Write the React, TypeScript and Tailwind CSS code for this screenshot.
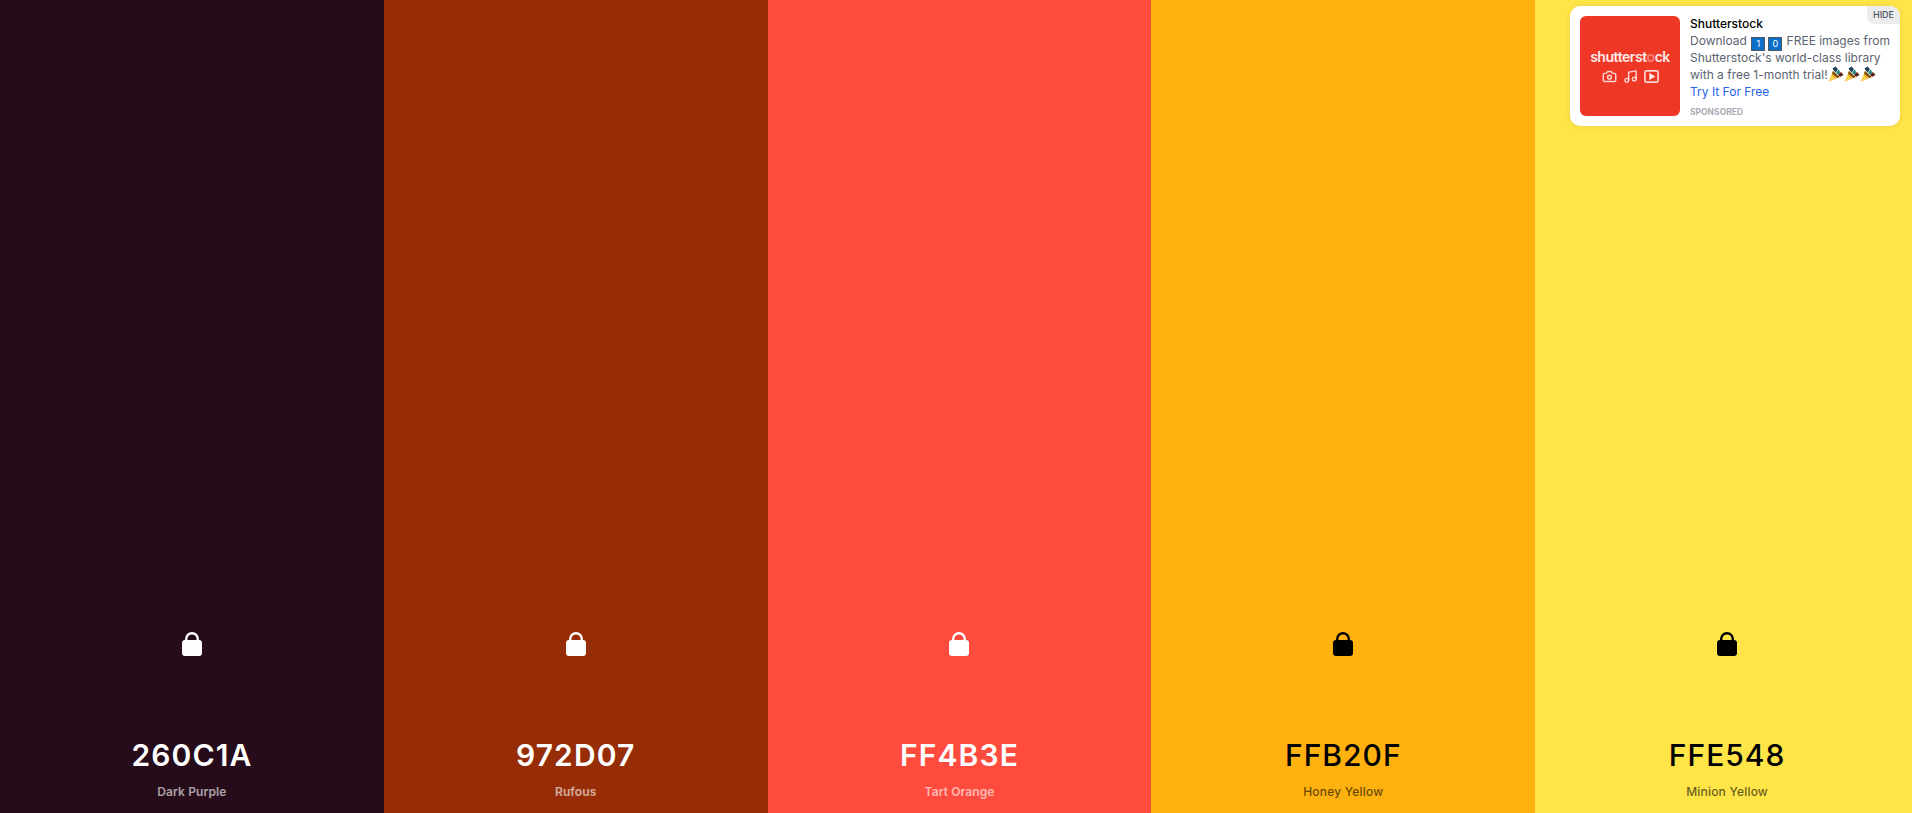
import { Camera, Music } from 'lucide-react'

const colors = [
  { hex: '260C1A', name: 'Dark Purple', bg: 'bg-[#260c1a]', text: 'text-white', weight: 'font-semibold tracking-[1.1px]', label: 'font-semibold tracking-[0.1px]' },
  { hex: '972D07', name: 'Rufous', bg: 'bg-[#972d07]', text: 'text-white', weight: 'font-semibold tracking-[1.1px]', label: 'font-semibold tracking-[0.1px]' },
  { hex: 'FF4B3E', name: 'Tart Orange', bg: 'bg-[#ff4b3e]', text: 'text-white', weight: 'font-semibold tracking-[1.1px]', label: 'font-semibold tracking-[0.1px]' },
  { hex: 'FFB20F', name: 'Honey Yellow', bg: 'bg-[#ffb20f]', text: 'text-black', weight: 'font-medium tracking-[1px]', label: 'font-medium tracking-[0.2px]' },
  { hex: 'FFE548', name: 'Minion Yellow', bg: 'bg-[#ffe548]', text: 'text-black', weight: 'font-medium tracking-[1px]', label: 'font-medium tracking-[0.2px]' },
]

function Lock() {
  return (
    <svg viewBox="0 0 22 24" className="h-6 w-[22px]" fill="none">
      <path d="M5.2 10V7a5.8 5.8 0 0 1 11.6 0v3" stroke="currentColor" strokeWidth="2.4" />
      <rect x="1" y="8" width="20" height="16" rx="3" fill="currentColor" />
    </svg>
  )
}

function Keycap({ n }: { n: string }) {
  return (
    <span className="flex h-[14px] w-[14px] items-center justify-center border border-[#4b5563] bg-[#0a6fc9] text-[9px] leading-none text-white">
      {n}
    </span>
  )
}

function Popper() {
  return (
    <svg viewBox="0 0 16 16" className="inline-block h-[16px] w-[16px] align-[-3px]">
      <path d="M1 15.5 L5 5 L11.5 11 Z" fill="#f7b42c" />
      <path d="M1 15.5 L3.5 9 L7 12.8 Z" fill="#fbd34d" />
      <path d="M5 5 L11.5 11 L9.5 12 L4 7.5 Z" fill="#7a4a12" />
      <path d="M4.5 2.5 L7.5 0.5 L10 3.5 L7.5 6.5 Z" fill="#1d3b57" />
      <path d="M8 6.5 L11 3.5 L12 6.5 L10 8.5 Z" fill="#16808a" />
      <path d="M10 8.5 L13 6 L15.5 9 L12 11 Z" fill="#5c2418" />
    </svg>
  )
}

function Ad() {
  return (
    <div className="absolute top-[6px] right-[12px] flex h-[120px] w-[330px] gap-[10px] overflow-hidden rounded-[10px] bg-white py-[10px] pl-[10px] font-['Inter',sans-serif] shadow-[0_0_6px_rgba(0,0,0,0.08)]">
      <div className="flex h-[100px] w-[100px] shrink-0 flex-col items-center justify-center gap-[4px] rounded-[6px] bg-[#ef3726] text-white/80">
        <div className="text-[14px] leading-[17px] font-semibold tracking-[-0.45px] text-white/90">
          shutterst<span className="opacity-40">o</span>ck
        </div>
        <div className="flex items-center gap-[6px]">
          <Camera size={15} strokeWidth={2.2} />
          <Music size={15} strokeWidth={2.2} />
          <svg viewBox="0 0 16 16" className="h-[15px] w-[15px]" fill="none" stroke="currentColor" strokeWidth="1.8">
            <rect x="1" y="2" width="14" height="12" rx="1.5" />
            <path d="M6.5 5.5 L10.5 8 L6.5 10.5 Z" fill="currentColor" />
          </svg>
        </div>
      </div>
      <div className="-mt-[1px] min-w-0 flex-1 text-[12px] leading-[17px] text-[#5b6472]">
        <div className="h-[17px] font-medium text-black">Shutterstock</div>
        <div className="h-[17px] whitespace-nowrap">
          Download{' '}
          <span className="mx-[1px] inline-flex gap-[3px] align-[-2px]">
            <Keycap n="1" />
            <Keycap n="0" />
          </span>{' '}
          FREE images from
        </div>
        <div className="h-[17px] whitespace-nowrap">Shutterstock's world-class library</div>
        <div className="h-[17px] whitespace-nowrap">
          with a free 1-month trial!
          <Popper />
          <Popper />
          <Popper />
        </div>
        <div className="h-[17px] text-[#2563eb]">Try It For Free</div>
        <div className="mt-[7px] text-[8.5px] leading-[10px] font-bold text-[#a9adb3]">SPONSORED</div>
      </div>
      <div className="absolute top-0 right-0 flex h-[18px] w-[33px] items-center justify-center rounded-bl-[8px] bg-[#ececec] text-[9px] font-medium text-[#4b5563]">
        HIDE
      </div>
    </div>
  )
}

export default function App() {
  return (
    <div className="relative h-[813px] w-full overflow-hidden font-['Inter',sans-serif]">
      <div className="flex h-full w-[1919px]">
        {colors.map((c) => (
          <div key={c.hex} className={`flex flex-1 flex-col items-center pt-[632px] ${c.bg} ${c.text}`}>
            <Lock />
            <div className={`mt-[81px] text-[30px] leading-[36px] ${c.weight}`}>{c.hex}</div>
            <div className={`mt-[11px] text-[12px] leading-[16px] opacity-60 ${c.label}`}>{c.name}</div>
          </div>
        ))}
      </div>
      <Ad />
    </div>
  )
}
